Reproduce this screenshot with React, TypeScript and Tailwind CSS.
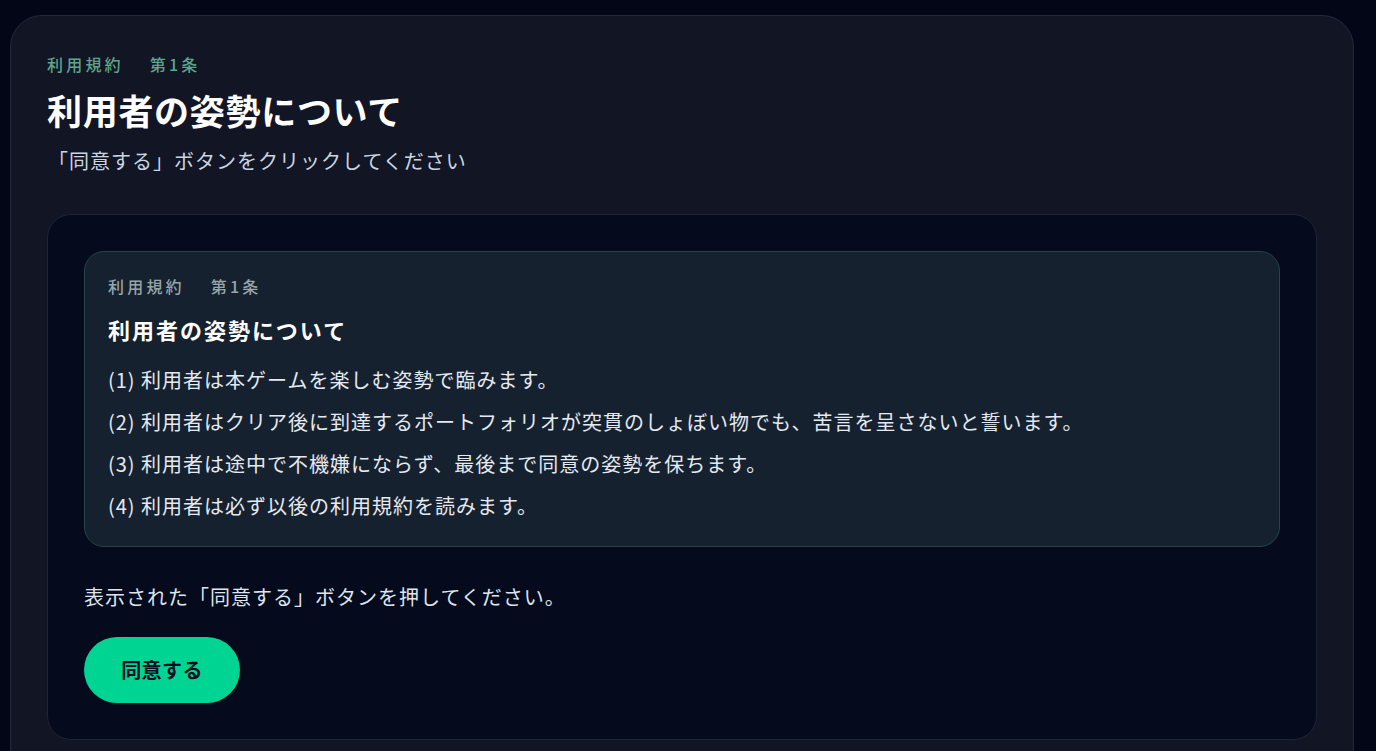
import React from "react";

const items = [
  "(1) 利用者は本ゲームを楽しむ姿勢で臨みます。",
  "(2) 利用者はクリア後に到達するポートフォリオが突貫のしょぼい物でも、苦言を呈さないと誓います。",
  "(3) 利用者は途中で不機嫌にならず、最後まで同意の姿勢を保ちます。",
  "(4) 利用者は必ず以後の利用規約を読みます。",
];

export default function App() {
  return (
    <div
      className="h-[751px] overflow-hidden bg-[#020617] px-[10px] pt-[15px]"
      style={{ fontFamily: '"Noto Sans CJK JP", "Noto Sans", sans-serif' }}
    >
      <div className="h-[800px] w-[1344px] rounded-[32px] border border-[#242838] bg-[#121524] px-[36px] pt-[36px]">
        <div className="flex items-center text-[16px] font-medium leading-[24px] tracking-[0.2em] text-[#5fa58b]">
          <span>利用規約</span>
          <span className="ml-[26px]">第1条</span>
        </div>
        <h1 className="mt-[10px] text-[35px] font-bold leading-[48px] tracking-[0.02em] text-white">
          利用者の姿勢について
        </h1>
        <p className="mt-[12px] pl-[1px] text-[20px] leading-[30px] tracking-[0.05em] text-[#cbd5e1]">
          「同意する」ボタンをクリックしてください
        </p>
        <div className="mt-[38px] w-[1270px] rounded-[24px] border border-[#1f2336] bg-[#050a1c] p-[36px]">
          <div className="rounded-[20px] border border-[#24444a] bg-[#16212f] px-[23px] pb-[19px] pt-[22px]">
            <div className="flex items-center text-[16px] font-medium leading-[24px] tracking-[0.2em] text-[#98a6aa]">
              <span>利用規約</span>
              <span className="ml-[26px]">第1条</span>
            </div>
            <h2 className="mt-[15px] text-[22px] font-bold leading-[32px] tracking-[0.09em] text-white">
              利用者の姿勢について
            </h2>
            <ul className="mt-[14px] flex flex-col">
              {items.map((t) => (
                <li
                  key={t}
                  className="text-[20px] leading-[42px] tracking-[0.05em] text-[#e5e9f0]"
                >
                  {t}
                </li>
              ))}
            </ul>
          </div>
          <p className="mt-[35px] text-[20px] leading-[30px] tracking-[0.05em] text-[#dfe5ee]">
            表示された「同意する」ボタンを押してください。
          </p>
          <button className="mt-[25px] flex h-[66px] w-[156px] items-center justify-center rounded-full bg-[#00d492] text-[20px] font-bold tracking-[0.02em] text-[#041022]">
            同意する
          </button>
        </div>
      </div>
    </div>
  );
}
